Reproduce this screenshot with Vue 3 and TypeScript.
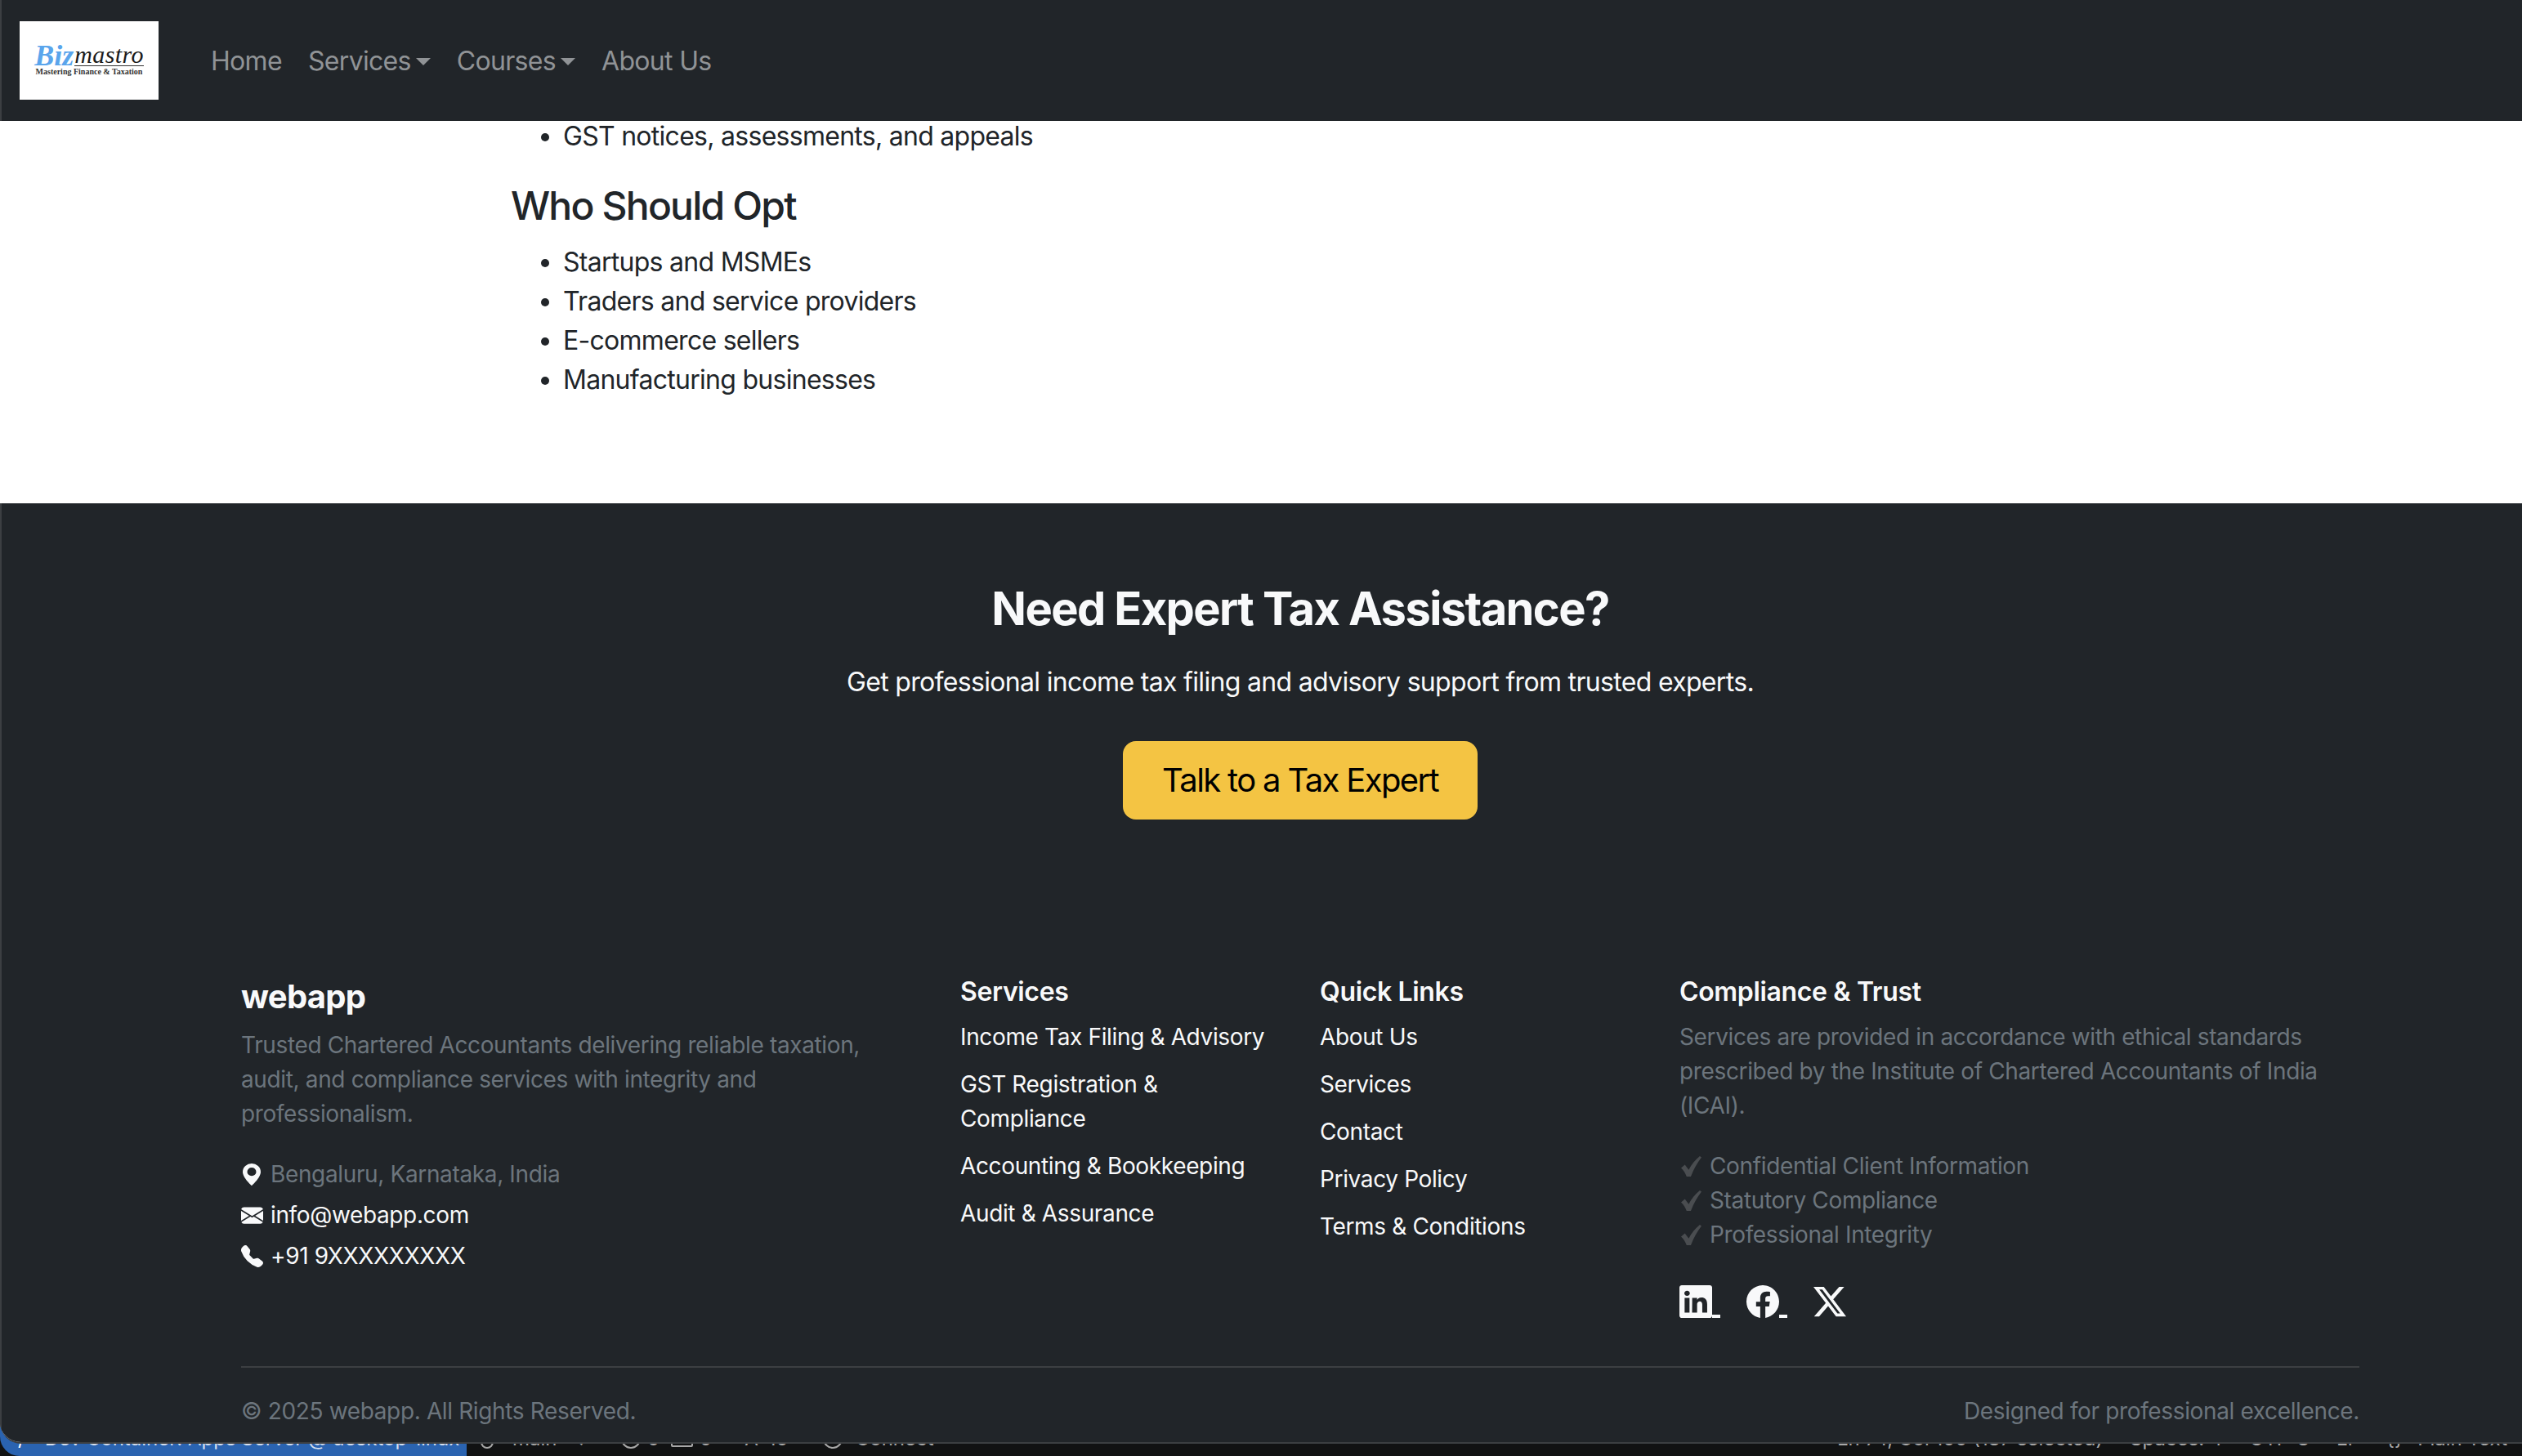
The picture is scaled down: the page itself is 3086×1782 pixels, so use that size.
<script setup lang="ts">
const navLinks = [
  { label: 'Home', caret: false },
  { label: 'Services', caret: true },
  { label: 'Courses', caret: true },
  { label: 'About Us', caret: false },
]
const audience = ['Startups and MSMEs', 'Traders and service providers', 'E-commerce sellers', 'Manufacturing businesses']
const services = ['Income Tax Filing & Advisory', 'GST Registration & Compliance', 'Accounting & Bookkeeping', 'Audit & Assurance']
const quickLinks = ['About Us', 'Services', 'Contact', 'Privacy Policy', 'Terms & Conditions']
const checks = ['Confidential Client Information', 'Statutory Compliance', 'Professional Integrity']
</script>

<template>
  <div class="page">
    <div class="window">
      <nav class="navbar">
        <div class="logo">
          <div class="logo-name"><span class="biz">Biz</span><span class="mastro">mastro</span></div>
          <div class="logo-tag">Mastering Finance &amp; Taxation</div>
        </div>
        <ul class="nav-list">
          <li v-for="link in navLinks" :key="link.label" class="nav-item">
            {{ link.label }}<span v-if="link.caret" class="caret"></span>
          </li>
        </ul>
      </nav>

      <main class="content">
        <ul class="bullets first">
          <li>GST notices, assessments, and appeals</li>
        </ul>
        <h4>Who Should Opt</h4>
        <ul class="bullets">
          <li v-for="item in audience" :key="item">{{ item }}</li>
        </ul>
      </main>

      <footer class="footer">
        <section class="cta">
          <h2>Need Expert Tax Assistance?</h2>
          <p>Get professional income tax filing and advisory support from trusted experts.</p>
          <a class="cta-btn">Talk to a Tax Expert</a>
        </section>

        <div class="columns">
          <div class="col">
            <h5 class="brand">webapp</h5>
            <p class="muted desc">Trusted Chartered Accountants delivering reliable taxation, audit, and compliance services with integrity and professionalism.</p>
            <ul class="contact">
              <li class="muted">
                <svg class="ci geo" viewBox="2 0 12 16" preserveAspectRatio="none"><path d="M8 16s6-5.686 6-10A6 6 0 0 0 2 6c0 4.314 6 10 6 10m0-7a3 3 0 1 1 0-6 3 3 0 0 1 0 6" /></svg>
                Bengaluru, Karnataka, India
              </li>
              <li>
                <svg class="ci" viewBox="0 0 16 16"><path d="M.05 3.555A2 2 0 0 1 2 2h12a2 2 0 0 1 1.95 1.555L8 8.414zM0 4.697v7.104l5.803-3.558zM6.761 8.83l-6.57 4.027A2 2 0 0 0 2 14h12a2 2 0 0 0 1.808-1.144l-6.57-4.027L8 9.586zm3.436-.586L16 11.801V4.697z" /></svg>
                info@webapp.com
              </li>
              <li>
                <svg class="ci" viewBox="0 0 16 16"><path d="M1.885.511a1.745 1.745 0 0 1 2.61.163L6.29 2.98c.329.423.445.974.315 1.494l-.547 2.19a.68.68 0 0 0 .178.643l2.457 2.457a.68.68 0 0 0 .644.178l2.189-.547a1.75 1.75 0 0 1 1.494.315l2.306 1.794c.829.645.905 1.87.163 2.611l-1.034 1.034c-.74.74-1.846 1.065-2.877.702a18.6 18.6 0 0 1-7.01-4.42 18.6 18.6 0 0 1-4.42-7.009c-.362-1.03-.037-2.137.703-2.877z" /></svg>
                +91 9XXXXXXXXX
              </li>
            </ul>
          </div>

          <div class="col">
            <h6>Services</h6>
            <ul class="links">
              <li v-for="item in services" :key="item">{{ item }}</li>
            </ul>
          </div>

          <div class="col">
            <h6>Quick Links</h6>
            <ul class="links">
              <li v-for="item in quickLinks" :key="item">{{ item }}</li>
            </ul>
          </div>

          <div class="col">
            <h6>Compliance &amp; Trust</h6>
            <p class="muted trust">Services are provided in accordance with ethical standards prescribed by the Institute of Chartered Accountants of India (ICAI).</p>
            <ul class="checks">
              <li v-for="item in checks" :key="item" class="muted">
                <svg class="check" viewBox="0 0 24 24"><path d="M0 14 L4.5 10 L9 16 C12 10 17 4 22 0 L24 1.5 C19 8 15 15 11.5 24 L6.5 24 C5 20 3 17 0 14Z" /></svg>
                {{ item }}
              </li>
            </ul>
            <div class="social">
              <a class="social-link tail">
                <svg viewBox="0 0 16 16"><path d="M0 1.146C0 .513.526 0 1.175 0h13.65C15.474 0 16 .513 16 1.146v13.708c0 .633-.526 1.146-1.175 1.146H1.175C.526 16 0 15.487 0 14.854zm4.943 12.248V6.169H2.542v7.225zm-1.2-8.212c.837 0 1.358-.554 1.358-1.248-.015-.709-.52-1.248-1.342-1.248S2.4 3.226 2.4 3.934c0 .694.521 1.248 1.327 1.248zm4.908 8.212V9.359c0-.216.016-.432.08-.586.173-.431.568-.878 1.232-.878.869 0 1.216.662 1.216 1.634v3.865h2.401V9.25c0-2.22-1.184-3.252-2.764-3.252-1.274 0-1.845.7-2.165 1.193v.025h-.016l.016-.025V6.169h-2.4c.03.678 0 7.225 0 7.225z" /></svg>
              </a>
              <a class="social-link tail">
                <svg viewBox="0 0 16 16"><path d="M16 8.049c0-4.446-3.582-8.05-8-8.05C3.58 0-.002 3.603-.002 8.05c0 4.017 2.926 7.347 6.75 7.951v-5.625h-2.03V8.05H6.75V6.275c0-2.017 1.195-3.131 3.022-3.131.876 0 1.791.157 1.791.157v1.98h-1.009c-.993 0-1.303.621-1.303 1.258v1.51h2.218l-.354 2.326H9.25V16c3.824-.604 6.75-3.934 6.75-7.951" /></svg>
              </a>
              <a class="social-link">
                <svg viewBox="0 0 16 16"><path d="M12.6.75h2.454l-5.36 6.142L16 15.25h-4.937l-3.867-5.07-4.425 5.07H.316l5.733-6.57L0 .75h5.063l3.495 4.633L12.601.75Zm-.86 13.028h1.36L4.323 2.145H2.865z" /></svg>
              </a>
            </div>
          </div>
        </div>

        <div class="bottom">
          <span>© 2025 webapp. All Rights Reserved.</span>
          <span>Designed for professional excellence.</span>
        </div>
      </footer>
    </div>

    <div class="statusbar">
      <div class="remote"><span class="slash">/</span><span>Dev Container: Apps Server @ desktop-linux</span></div>
      <div class="status-left">
        <span class="ring small"></span>
        <span class="main-branch">main</span>
        <span class="sync">↩</span>
        <span class="ring"></span>
        <span>0</span>
        <span class="box"></span>
        <span>0</span>
        <span class="ports">A</span>
        <span>10</span>
        <span class="ring connect"></span>
        <span>Connect</span>
      </div>
      <div class="status-right">
        <span>Ln 74, Col 100 (187 selected)</span>
        <span>Spaces: 4</span>
        <span>UTF-8</span>
        <span>LF</span>
        <span class="lang"><span>{}</span><span>Plain Text</span></span>
      </div>
    </div>
  </div>
</template>

<style scoped>
* {
  box-sizing: border-box;
  margin: 0;
  padding: 0;
}

ul {
  list-style: none;
}

.page {
  width: 3086px;
  height: 1782px;
  overflow: hidden;
  background: #6f8f7a;
  font-family: Inter, 'Liberation Sans', sans-serif;
  font-size: 32px;
  line-height: 1.5;
  letter-spacing: -0.68px;
  color: #212529;
}

.window {
  position: relative;
  z-index: 1;
  height: 1767px;
  display: flex;
  flex-direction: column;
  overflow: hidden;
  background: #fff;
  border-bottom: 2px solid #3c3f42;
  border-bottom-left-radius: 26px;
}

/* nav */
.navbar {
  flex: none;
  position: relative;
  z-index: 2;
  height: 148px;
  display: flex;
  align-items: center;
  gap: 48px;
  padding-left: 22px;
  background: #212529;
  border-left: 2px solid #3c3f42;
}

.logo {
  width: 170px;
  height: 96px;
  background: #fff;
  display: flex;
  flex-direction: column;
  justify-content: center;
  align-items: center;
  letter-spacing: 0;
}

.logo-name {
  font-family: 'Liberation Serif', serif;
  line-height: 26px;
  font-style: italic;
  white-space: nowrap;
  display: flex;
  align-items: flex-end;
}

.biz {
  color: #5aa5ec;
  font-size: 36px;
  font-weight: 700;
  margin-right: 1px;
}

.mastro {
  color: #1b1b1b;
  font-size: 30px;
  letter-spacing: 0.4px;
  border-bottom: 1px solid #333;
}

.logo-tag {
  font-family: 'Liberation Serif', serif;
  font-size: 10px;
  line-height: 14px;
  font-weight: 700;
  color: #333;
  white-space: nowrap;
}

.nav-list {
  display: flex;
  padding-top: 2px;
}

.nav-item {
  padding: 0 16px;
  color: #909396;
  display: flex;
  align-items: center;
  white-space: nowrap;
}

.caret {
  width: 0;
  height: 0;
  margin-left: 6px;
  border-top: 9px solid #909396;
  border-left: 9px solid transparent;
  border-right: 9px solid transparent;
}

/* main text */
.content {
  flex: none;
  height: 468px;
  padding-left: 625px;
  color: #212529;
}

.bullets {
  list-style: disc;
  padding-left: 64px;
  letter-spacing: -0.72px;
}

.bullets.first {
  margin-top: -5px;
  margin-bottom: 32px;
}

.content h4 {
  font-size: 48px;
  font-weight: 500;
  line-height: 58px;
  letter-spacing: -1.8px;
  margin-bottom: 16px;
}

/* footer */
.footer {
  flex: 1;
  background: #212529;
  padding-left: 293px;
  padding-right: 199px;
  color: #f8f9fa;
  border-left: 2px solid #3c3f42;
}

.cta {
  padding-top: 96px;
  text-align: center;
}

.cta h2 {
  font-size: 56px;
  font-weight: 700;
  line-height: 67px;
  letter-spacing: -1.6px;
  margin-bottom: 32px;
  color: #f8f9fa;
}

.cta p {
  margin-bottom: 48px;
  color: #f8f9fa;
}

.cta-btn {
  display: inline-block;
  padding: 18px 48px;
  font-size: 40px;
  line-height: 60px;
  letter-spacing: -1.65px;
  color: #000;
  background: #f4c443;
  border-radius: 16px;
}

.columns {
  display: grid;
  grid-template-columns: 4fr 2fr 2fr 4fr;
  margin: 187px -24px 0;
  font-size: 28px;
  line-height: 42px;
  letter-spacing: -0.36px;
}

.col {
  padding: 0 24px;
}

.brand {
  font-size: 40px;
  font-weight: 700;
  line-height: 60px;
  letter-spacing: -0.7px;
  margin-bottom: 8px;
  color: #f8f9fa;
}

.col h6 {
  font-size: 32px;
  font-weight: 600;
  line-height: 48px;
  letter-spacing: -0.35px;
  margin-bottom: 10px;
  color: #f8f9fa;
}

.muted {
  color: #6c757d;
}

.desc {
  margin-bottom: 32px;
  padding-right: 20px;
}

.contact li {
  display: flex;
  align-items: center;
  gap: 9px;
  margin-bottom: 8px;
}

.ci {
  width: 27px;
  height: 27px;
  fill: #f8f9fa;
  flex: none;
}

.ci.geo {
  width: 22px;
  margin-left: 2px;
  margin-right: 3px;
}

.links li {
  margin-bottom: 16px;
}

.trust {
  margin-bottom: 32px;
}

.checks li {
  display: flex;
  align-items: center;
  gap: 10px;
}

.check {
  width: 25px;
  height: 25px;
  margin-left: 2px;
  fill: #4a4d50;
  flex: none;
}

.social {
  display: flex;
  gap: 32px;
  margin-top: 41px;
}

.social-link {
  display: flex;
  align-items: flex-end;
}

.social-link svg {
  width: 40px;
  height: 40px;
  fill: #f8f9fa;
  display: block;
}

.tail::after {
  content: '';
  width: 10px;
  height: 4px;
  background: #f8f9fa;
}

.bottom {
  margin-top: 59px;
  padding-top: 32px;
  border-top: 2px solid #3c3f42;
  display: flex;
  justify-content: space-between;
  font-size: 28px;
  line-height: 42px;
  letter-spacing: -0.36px;
  color: #6c757d;
}

/* editor status bar, mostly hidden behind the window */
.statusbar {
  height: 60px;
  margin-top: -45px;
  display: flex;
  background: #111213;
  font-size: 24px;
  line-height: 36px;
  letter-spacing: 0;
  color: #a8a8a8;
  white-space: nowrap;
}

.remote {
  width: 571px;
  padding: 21px 0 0 22px;
  display: flex;
  gap: 24px;
  background: #2a63b0;
  color: #d5dfee;
  border-bottom-left-radius: 24px;
  overflow: hidden;
}

.slash {
  color: #fff;
}

.status-left {
  padding: 21px 0 0 17px;
  display: flex;
  align-items: flex-start;
  gap: 8px;
}

.ring {
  width: 24px;
  height: 24px;
  margin-top: 6px;
  margin-left: 23px;
  border: 2px solid #a8a8a8;
  border-radius: 50%;
}

.ring.small {
  width: 16px;
  height: 16px;
  margin-top: 14px;
  margin-left: 0;
}

.main-branch {
  margin-left: 15px;
}

.sync {
  margin-left: 12px;
}

.box {
  width: 27px;
  height: 20px;
  margin-top: 8px;
  margin-left: 6px;
  border: 2px solid #a8a8a8;
  border-radius: 2px;
}

.ports {
  margin-left: 32px;
  margin-right: 4px;
}

.connect {
  margin-left: 34px;
  margin-right: 8px;
}

.status-right {
  margin-left: auto;
  padding: 21px 18px 0 0;
  display: flex;
  gap: 33px;
}

.lang {
  display: flex;
  gap: 18px;
}
</style>
